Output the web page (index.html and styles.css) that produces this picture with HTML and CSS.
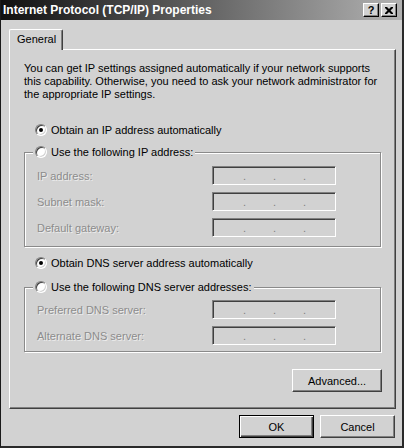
FILE: index.html
```html
<!DOCTYPE html>
<html>
<head>
<meta charset="utf-8">
<link rel="stylesheet" href="styles.css">
</head>
<body>
<div class="window">
  <div class="titlebar">
    <span class="title">Internet Protocol (TCP/IP) Properties</span>
    <div class="tb-buttons">
      <span class="tb-btn help">?</span>
      <span class="tb-btn close"><svg width="8" height="7" viewBox="0 0 8 7"><path d="M0 0h2l2 2 2-2h2v1L5.5 3.5 8 6v1H6L4 5 2 7H0V6l2.5-2.5L0 1z" fill="#000"/></svg></span>
    </div>
  </div>
  <div class="client">
    <div class="tabs"><div class="tab">General</div></div>
    <div class="panel">
      <p class="intro">You can get IP settings assigned automatically if your network supports<br>this capability. Otherwise, you need to ask your network administrator for<br>the appropriate IP settings.</p>
      <div class="option first"><span class="radio checked"></span><span>Obtain an IP address automatically</span></div>
      <fieldset class="group g1">
        <legend class="legend"><span class="radio"></span><span>Use the following IP address:</span></legend>
        <div class="field"><span class="label">IP address:</span><span class="ipbox"><span class="dot">.</span><span class="dot">.</span><span class="dot">.</span></span></div>
        <div class="field"><span class="label">Subnet mask:</span><span class="ipbox"><span class="dot">.</span><span class="dot">.</span><span class="dot">.</span></span></div>
        <div class="field"><span class="label">Default gateway:</span><span class="ipbox"><span class="dot">.</span><span class="dot">.</span><span class="dot">.</span></span></div>
      </fieldset>
      <div class="option second"><span class="radio checked"></span><span>Obtain DNS server address automatically</span></div>
      <fieldset class="group g2">
        <legend class="legend"><span class="radio"></span><span>Use the following DNS server addresses:</span></legend>
        <div class="field"><span class="label">Preferred DNS server:</span><span class="ipbox"><span class="dot">.</span><span class="dot">.</span><span class="dot">.</span></span></div>
        <div class="field"><span class="label">Alternate DNS server:</span><span class="ipbox"><span class="dot">.</span><span class="dot">.</span><span class="dot">.</span></span></div>
      </fieldset>
      <button class="btn advanced">Advanced...</button>
    </div>
    <div class="footer">
      <button class="btn default">OK</button>
      <button class="btn">Cancel</button>
    </div>
  </div>
</div>
</body>
</html>
```

FILE: styles.css
```css
html, body {
  margin: 0;
  padding: 0;
  background: #d2d2d2;
}
body {
  font-family: "Liberation Sans", Arial, sans-serif;
  font-size: 11px;
  color: #000;
}
.window {
  width: 404px;
  height: 448px;
  box-sizing: border-box;
  border-left: 1px solid #1a1a1a;
  border-right: 2px solid #2a2a2a;
  border-bottom: 2px solid #2a2a2a;
  background: #d2d2d2;
  display: flex;
  flex-direction: column;
  overflow: hidden;
}
.titlebar {
  height: 20px;
  flex: none;
  display: flex;
  align-items: center;
  padding-left: 2px;
  background: linear-gradient(to right, #101010 0%, #5a5a5a 45%, #b2b2b2 100%);
  color: #fff;
  font-weight: bold;
  font-size: 12px;
}
.title {
  flex: 1;
  white-space: nowrap;
}
.tb-buttons {
  display: flex;
  gap: 2px;
  margin-right: 5px;
}
.tb-btn {
  width: 16px;
  height: 14px;
  box-sizing: border-box;
  background: #d2d2d2;
  border: 1px solid;
  border-color: #fff #000 #000 #fff;
  box-shadow: inset -1px -1px #808080;
  display: flex;
  align-items: center;
  justify-content: center;
  color: #000;
  font-size: 11px;
  font-weight: bold;
  line-height: 1;
}
.client {
  padding: 9px 6px 0 8px;
  display: flex;
  flex-direction: column;
}
.tabs {
  display: flex;
  height: 20px;
}
.tab {
  width: 54px;
  height: 21px;
  box-sizing: border-box;
  border: 1px solid;
  border-color: #fff #404040 transparent #fff;
  border-bottom: none;
  border-radius: 2px 2px 0 0;
  box-shadow: inset -1px 0 #808080;
  padding-left: 7px;
  line-height: 19px;
  background: #d2d2d2;
  position: relative;
  z-index: 1;
}
.panel {
  height: 360px;
  box-sizing: border-box;
  border: 1px solid;
  border-color: #fff #404040 #404040 #fff;
  box-shadow: inset -1px -1px #808080;
  padding: 12px 14px 0 14px;
  display: flex;
  flex-direction: column;
}
.intro {
  margin: 0;
  line-height: 13px;
  white-space: nowrap;
}
.option {
  display: flex;
  align-items: center;
  gap: 4px;
  height: 16px;
  padding-left: 11px;
}
.option.first { margin-top: 21px; }
.option.second { margin-top: 8px; }
.radio {
  width: 12px;
  height: 12px;
  box-sizing: border-box;
  border-radius: 50%;
  background: #fff;
  border: 1px solid;
  border-color: #808080 #fff #fff #808080;
  box-shadow: inset 1px 1px #404040, inset -1px -1px #d2d2d2;
  display: flex;
  align-items: center;
  justify-content: center;
  flex: none;
}
.radio.checked::after {
  content: "";
  width: 4px;
  height: 4px;
  border-radius: 50%;
  background: #000;
}
.group {
  margin: 6px 0 0;
  padding: 6px 8px 9px;
  border: 1px solid #8a8a8a;
  box-shadow: inset 1px 1px #fff, 1px 1px #fff;
  display: flex;
  flex-direction: column;
  gap: 7px;
}
.group.g2 {
  margin-top: 8px;
  padding-top: 5px;
  padding-bottom: 6px;
}
.legend {
  display: flex;
  align-items: center;
  gap: 4px;
  height: 16px;
  padding: 0 2px;
  background: #d2d2d2;
}
.field {
  display: flex;
  align-items: center;
  height: 19px;
  margin-left: 4px;
}
.label {
  width: 175px;
  color: #8c8c8c;
  text-shadow: 1px 1px 0 rgba(255, 255, 255, 0.6);
}
.ipbox {
  width: 124px;
  height: 19px;
  box-sizing: border-box;
  border: 1px solid;
  border-color: #808080 #fff #fff #808080;
  box-shadow: inset 1px 1px #404040, inset -1px -1px #d2d2d2;
  display: flex;
  align-items: center;
  padding-left: 30px;
  gap: 27px;
}
.dot {
  width: 3px;
  color: #808080;
  line-height: 1;
  padding-top: 2px;
}
.btn {
  font-family: "Liberation Sans", Arial, sans-serif;
  font-size: 11px;
  color: #000;
  background: #d2d2d2;
  width: 75px;
  height: 23px;
  box-sizing: border-box;
  border: 1px solid;
  border-color: #fff #404040 #404040 #fff;
  box-shadow: inset -1px -1px #808080;
  padding: 0;
  margin: 0;
}
.btn.advanced {
  width: 90px;
  align-self: flex-end;
  margin-top: 17px;
  margin-right: -1px;
}
.btn.default {
  border: 1px solid #000;
  box-shadow: inset 1px 1px #fff, inset -1px -1px #404040, inset -2px -2px #808080;
}
.footer {
  display: flex;
  justify-content: flex-end;
  gap: 6px;
  margin-top: 6px;
  padding-right: 1px;
}
```
